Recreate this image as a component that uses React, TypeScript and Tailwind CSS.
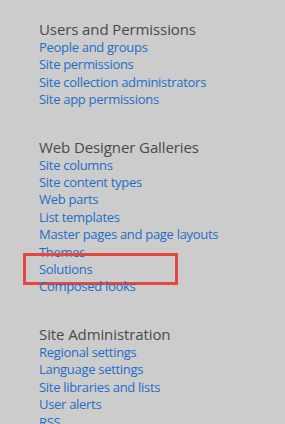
const sections = [
  {
    title: "Users and Permissions",
    links: ["People and groups", "Site permissions", "Site collection administrators", "Site app permissions"],
  },
  {
    title: "Web Designer Galleries",
    links: [
      "Site columns",
      "Site content types",
      "Web parts",
      "List templates",
      "Master pages and page layouts",
      "Themes",
      "Solutions",
      "Composed looks",
    ],
  },
  {
    title: "Site Administration",
    links: ["Regional settings", "Language settings", "Site libraries and lists", "User alerts", "RSS"],
  },
];

export default function App() {
  return (
    <div className="w-[285px] h-[424px] overflow-hidden bg-[#cccccc] pl-[39px] pt-[19px] font-['Segoe_UI','Open_Sans',sans-serif]">
      <div className="flex flex-col gap-[28px]">
        {sections.map((s) => (
          <div key={s.title} className="flex flex-col">
            <h2 className="text-[15px] leading-[20px] tracking-[-0.1px] font-normal text-[#4a4a4a]">{s.title}</h2>
            <ul className="flex flex-col">
              {s.links.map((l) => (
                <li key={l} className="relative text-[13px] leading-[17.4px] tracking-[-0.3px] text-[#1e6ec8] whitespace-nowrap">
                  <a href="#">{l}</a>
                  {l === "Solutions" && (
                    <span className="absolute left-[-16px] top-[-8px] w-[155px] h-[32px] border-[3px] border-[#e5463f]" />
                  )}
                </li>
              ))}
            </ul>
          </div>
        ))}
      </div>
    </div>
  );
}
